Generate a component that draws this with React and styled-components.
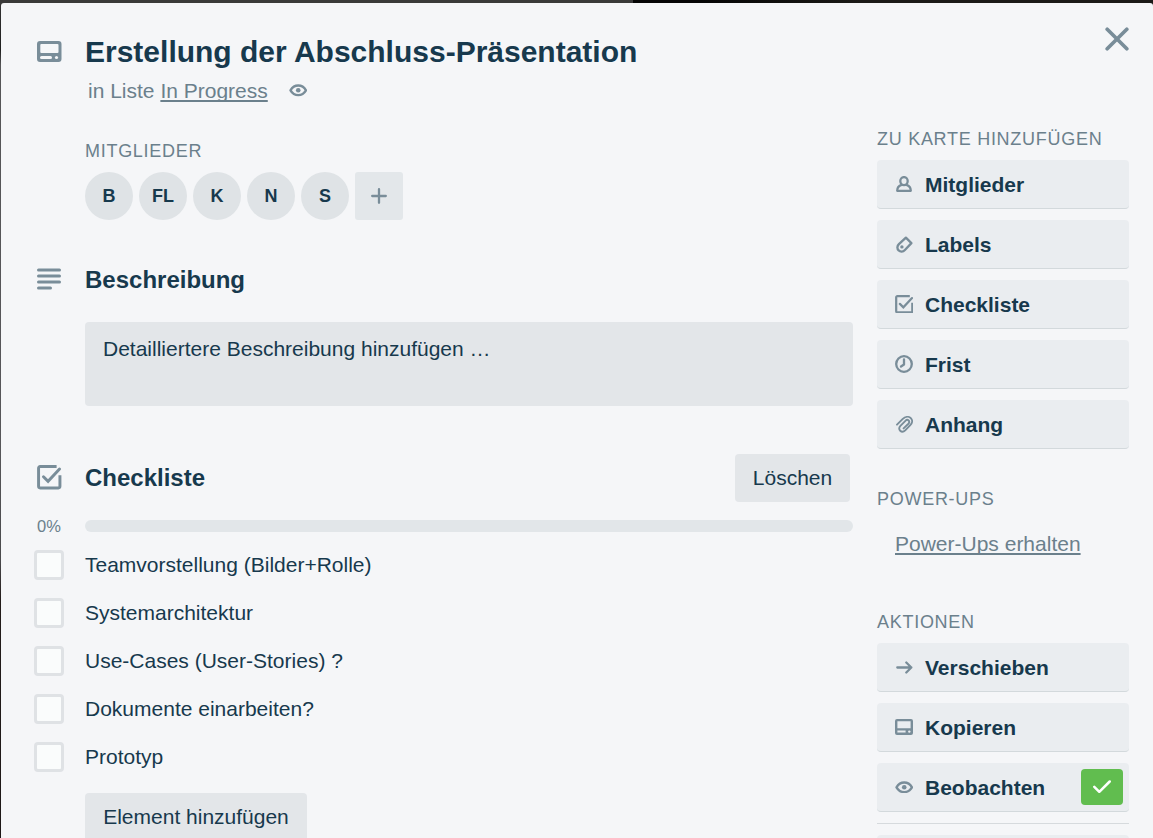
import React from "react";
import styled, { createGlobalStyle } from "styled-components";

const Global = createGlobalStyle`
  * { box-sizing: border-box; }
  html, body { margin: 0; height: 838px; overflow: hidden; }
  body {
    font: 21px/30px "Liberation Sans", Arial, sans-serif;
    color: #17394d;
    background: #3a3a3a;
  }
`;

const Backdrop = styled.div`
  height: 838px;
  padding: 3px 0 0 1px;
  overflow: hidden;
  background:
    linear-gradient(90deg, #3a3a39 0 633px, #050505 633px 700px, #1b1a17 860px 100%) 0 0 / 100% 4px no-repeat,
    linear-gradient(180deg, #343434 0, #1f1f1f 50px, #555557 65px, #565659 450px, #4a4a4c 560px, #231c1a 600px, #1d1817 100%);
`;

const Dialog = styled.div`
  display: flex;
  height: 860px;
  padding-left: 36px;
  gap: 24px;
  background: #f5f6f8;
  border-radius: 3px;
`;

const Main = styled.main`
  width: 816px;
  padding-top: 31px;
`;

const Side = styled.aside`
  width: 252px;
  padding-top: 16px;
`;

const Row = styled.div`
  display: flex;
  align-items: center;
  height: ${(p) => p.$h}px;
  margin-top: ${(p) => p.$mt || 0}px;
`;

const Gutter = styled.div`
  flex: none;
  display: flex;
  width: 48px;
  padding-bottom: ${(p) => p.$lift || 0}px;
`;

const Indent = styled.div`
  margin-left: 48px;
`;

const Title = styled.h1`
  margin: 0;
  font-size: 30px;
  line-height: 36px;
  white-space: nowrap;
`;

const Heading = styled.h3`
  flex: 1;
  margin: 0;
  font-size: 24px;
  line-height: 30px;
`;

const Location = styled.p`
  display: flex;
  align-items: center;
  height: 30px;
  margin: 6px 0 0 51px;
  color: #6b808c;
  white-space: pre;

  svg { margin: 0 0 1px 21px; }
`;

const Link = styled.a`
  color: #6b808c;
  text-decoration: underline;
  text-decoration-thickness: 2px;
  text-underline-offset: 2px;
  text-decoration-skip-ink: none;
`;

const Label = styled.h4`
  margin: ${(p) => p.$mt || 0}px 0 0;
  font-size: 18px;
  font-weight: 400;
  line-height: 30px;
  letter-spacing: 0.72px;
  text-transform: uppercase;
  color: #6b808c;
  white-space: nowrap;
`;

const Members = styled.div`
  display: flex;
  gap: 6px;
  margin-top: 6px;
`;

const Avatar = styled.div`
  width: 48px;
  height: 48px;
  border-radius: 50%;
  background: #dfe3e6;
  font-size: 18px;
  font-weight: 700;
  line-height: 48px;
  text-align: center;
`;

const AddMember = styled.div`
  display: flex;
  align-items: center;
  justify-content: center;
  width: 48px;
  height: 48px;
  border-radius: 3px;
  background: #e3e7ea;
`;

const Description = styled.div`
  height: 84px;
  margin: 27px 0 0 48px;
  padding: 12px 18px;
  border-radius: 4px;
  background: #e3e6e9;
`;

const Button = styled.div`
  width: ${(p) => p.$w}px;
  height: 48px;
  margin-right: ${(p) => p.$mr || 0}px;
  border-radius: 4px;
  background: #e3e6e9;
  line-height: 48px;
  text-align: center;
  white-space: nowrap;
`;

const Percent = styled.span`
  flex: none;
  width: 48px;
  font-size: 16.5px;
  color: #6b808c;
`;

const Track = styled.div`
  flex: 1;
  height: 12px;
  border-radius: 6px;
  background: #e2e6e9;
`;

const Item = styled.div`
  display: flex;
  align-items: center;
  height: 48px;
  gap: 21px;
  margin-left: -3px;
`;

const Checkbox = styled.span`
  width: 30px;
  height: 30px;
  border: 3px solid #dfe2e5;
  border-radius: 4px;
  background: #fafcfc;
`;

const Stack = styled.div`
  display: flex;
  flex-direction: column;
  gap: 11px;
  margin-top: 6px;
`;

const Action = styled.div`
  display: flex;
  align-items: center;
  height: 49px;
  padding: 0 6px 0 15px;
  border-bottom: 1px solid #d3d9dc;
  border-radius: 4px;
  background: #eaedf0;
  font-weight: 700;
`;

const ActionText = styled.span`
  padding-top: 2px;
  line-height: 30px;
`;

const IconSlot = styled.span`
  display: flex;
  justify-content: center;
  width: 24px;
  margin-right: 9px;
`;

const Badge = styled.span`
  display: flex;
  align-items: center;
  justify-content: center;
  width: 42px;
  height: 36px;
  margin-left: auto;
  border-radius: 4px;
  background: #61bd4f;
`;

const PowerUps = styled.div`
  height: 48px;
  margin-top: 6px;
  padding-left: 18px;
  line-height: 48px;
`;

const Divider = styled.div`
  height: 1px;
  background: #d6dadd;
`;

const Top = styled.div`
  display: flex;
  justify-content: flex-end;
  height: 105px;
  padding-top: 8px;
`;

const ICON = "#798d99";
const Svg = ({ w = 24, h = 24, vb, children, sw = 2, color = ICON }) => (
  <svg width={w} height={h} viewBox={vb || `0 0 ${w} ${h}`} fill="none" stroke={color} strokeWidth={sw} strokeLinecap="round" strokeLinejoin="round">
    {children}
  </svg>
);

const CardIcon = () => (
  <Svg w={24.5} h={21}>
    <path stroke="none" fill={ICON} fillRule="evenodd" d="M3 0h18.500a3 3 0 0 1 3 3v15a3 3 0 0 1-3 3H3a3 3 0 0 1-3-3V3a3 3 0 0 1 3-3zM4.300 3a1 1 0 0 0-1 1v7a1 1 0 0 0 1 1h16.200a1 1 0 0 0 1-1V4a1 1 0 0 0-1-1zM4.500 15a1.500 1.500 0 0 0 0 3h9a1.500 1.500 0 0 0 0-3z" />
    <circle cx="19.500" cy="16.500" r="1.600" stroke="none" fill="#f5f6f8" />
  </Svg>
);

const SmallCardIcon = () => (
  <Svg w={18} h={16}>
    <path stroke="none" fill={ICON} fillRule="evenodd" d="M2 0h14a2 2 0 0 1 2 2v12a2 2 0 0 1-2 2H2a2 2 0 0 1-2-2V2a2 2 0 0 1 2-2zM2.400 2.300v6.900h13.200V2.300zM2.400 11.500v2.100h8.200v-2.100z" />
    <circle cx="14.300" cy="12.600" r="1.200" stroke="none" fill="#eaedf0" />
  </Svg>
);

const EyeIcon = () => (
  <Svg w={18.5} h={12.6} sw={2.400}>
    <path d="M1.500 6.300C3.300 3.200 5.800 1.500 9.250 1.500s5.950 1.700 7.750 4.800c-1.800 3.100-4.300 4.800-7.750 4.800s-5.950-1.700-7.750-4.800z" />
    <circle cx="9.250" cy="6.300" r="2.300" stroke="none" fill={ICON} />
  </Svg>
);

const LinesIcon = () => (
  <Svg w={24} h={22} sw={3}>
    <path d="M1.500 2h21M1.500 8h21M1.500 14h21M1.500 20h12" />
  </Svg>
);

const CheckSquare = ({ s = 25 }) => (
  <Svg w={s} h={s} vb="0 0 25 25" sw={3}>
    <path strokeLinecap="butt" d="M20 1.600H3.200a1.600 1.600 0 0 0-1.600 1.600v18.600a1.600 1.600 0 0 0 1.600 1.600h18.600a1.600 1.600 0 0 0 1.600-1.600V10.500" />
    <path d="M6.600 12l4.700 4.700L23 4.200" strokeLinejoin="miter" />
  </Svg>
);

const UserIcon = () => (
  <Svg w={16} h={16} sw={2.300}>
    <ellipse cx="8" cy="5.100" rx="3.700" ry="4" />
    <path d="M5.600 8.800C2.700 9.600 1.200 11.600 1.200 14.800h13.600c0-3.200-1.500-5.200-4.400-6" />
  </Svg>
);

const TagIcon = () => (
  <Svg w={17} h={17} sw={2.300}>
    <path d="M9.900 1.600l5.500 5.500-6.500 6.900c-1.900 2-4.600 2-6.300.4s-1.600-4.400.3-6.300z" />
    <circle cx="5.900" cy="10.900" r="1.700" stroke="none" fill={ICON} />
  </Svg>
);

const ClockIcon = () => (
  <Svg w={18} h={18} sw={2.300}>
    <circle cx="9" cy="9" r="7.800" />
    <path d="M9 4.500v5L6 11.500" />
  </Svg>
);

const ClipIcon = () => (
  <Svg w={17} h={17} sw={1.900}>
    <path d="M1 8.700L6.800 2.900C9.500.4 12.900.3 14.800 2.200s1.700 4.800-.5 7L9.200 14.300c-1.600 1.600-3.600 1.700-5 .4s-1.300-3.400.2-4.900l5-5c1-1 2.400-1.100 3.200-.3s.8 2.100-.2 3.200L7.600 12.400" />
  </Svg>
);

const ArrowIcon = () => (
  <Svg w={17} h={13} sw={2.300}>
    <path d="M1.300 6.500h14M10.300 1.500l5 5-5 5" />
  </Svg>
);

const ITEMS = ["Teamvorstellung (Bilder+Rolle)", "Systemarchitektur", "Use-Cases (User-Stories) ?", "Dokumente einarbeiten?", "Prototyp"];
const ADD = [
  ["Mitglieder", <UserIcon />],
  ["Labels", <TagIcon />],
  ["Checkliste", <CheckSquare s={18.5} />],
  ["Frist", <ClockIcon />],
  ["Anhang", <ClipIcon />],
];
const ACTIONS = [
  ["Verschieben", <ArrowIcon />],
  ["Kopieren", <SmallCardIcon />],
  ["Beobachten", <EyeIcon />],
];

const ActionButton = ({ icon, label, children }) => (
  <Action>
    <IconSlot>{icon}</IconSlot>
    <ActionText>{label}</ActionText>
    {children}
  </Action>
);

export default function App() {
  return (
    <Backdrop>
      <Global />
      <Dialog>
        <Main>
          <Row $h={36}>
            <Gutter $lift={1}><CardIcon /></Gutter>
            <Title>Erstellung der Abschluss-Präsentation</Title>
          </Row>
          <Location>
            in Liste <Link>In Progress</Link>
            <EyeIcon />
          </Location>
          <Indent>
            <Label $mt={30}>Mitglieder</Label>
            <Members>
              {["B", "FL", "K", "N", "S"].map((m) => <Avatar key={m}>{m}</Avatar>)}
              <AddMember>
                <Svg w={16} h={16} sw={2.300}><path d="M1.200 8h13.600M8 1.200v13.600" /></Svg>
              </AddMember>
            </Members>
          </Indent>
          <Row $h={30} $mt={45}>
            <Gutter $lift={2}><LinesIcon /></Gutter>
            <Heading>Beschreibung</Heading>
          </Row>
          <Description>Detailliertere Beschreibung hinzufügen …</Description>
          <Row $h={48} $mt={48}>
            <Gutter $lift={1}><CheckSquare s={24.5} /></Gutter>
            <Heading>Checkliste</Heading>
            <Button $w={115} $mr={3}>Löschen</Button>
          </Row>
          <Row $h={12} $mt={18}>
            <Percent>0%</Percent>
            <Track />
          </Row>
          <Row $h={9} />
          {ITEMS.map((t) => <Item key={t}><Checkbox />{t}</Item>)}
          <Row $h={12} />
          <Indent><Button $w={222}>Element hinzufügen</Button></Indent>
        </Main>
        <Side>
          <Top>
            <Svg w={24} h={24} sw={3.700}><path d="M2.200 2.200l19.600 19.600M21.800 2.200L2.200 21.800" /></Svg>
          </Top>
          <Label>Zu Karte hinzufügen</Label>
          <Stack>
            {ADD.map(([label, icon]) => <ActionButton key={label} label={label} icon={icon} />)}
          </Stack>
          <Label $mt={35}>Power-Ups</Label>
          <PowerUps><Link>Power-Ups erhalten</Link></PowerUps>
          <Label $mt={39}>Aktionen</Label>
          <Stack>
            {ACTIONS.map(([label, icon]) => (
              <ActionButton key={label} label={label} icon={icon}>
                {label === "Beobachten" && (
                  <Badge>
                    <Svg w={18} h={14} sw={2.500} color="#fff"><path d="M1.300 6.800l5 5L16.700 1.500" /></Svg>
                  </Badge>
                )}
              </ActionButton>
            ))}
            <Divider />
            <Action />
          </Stack>
        </Side>
      </Dialog>
    </Backdrop>
  );
}
